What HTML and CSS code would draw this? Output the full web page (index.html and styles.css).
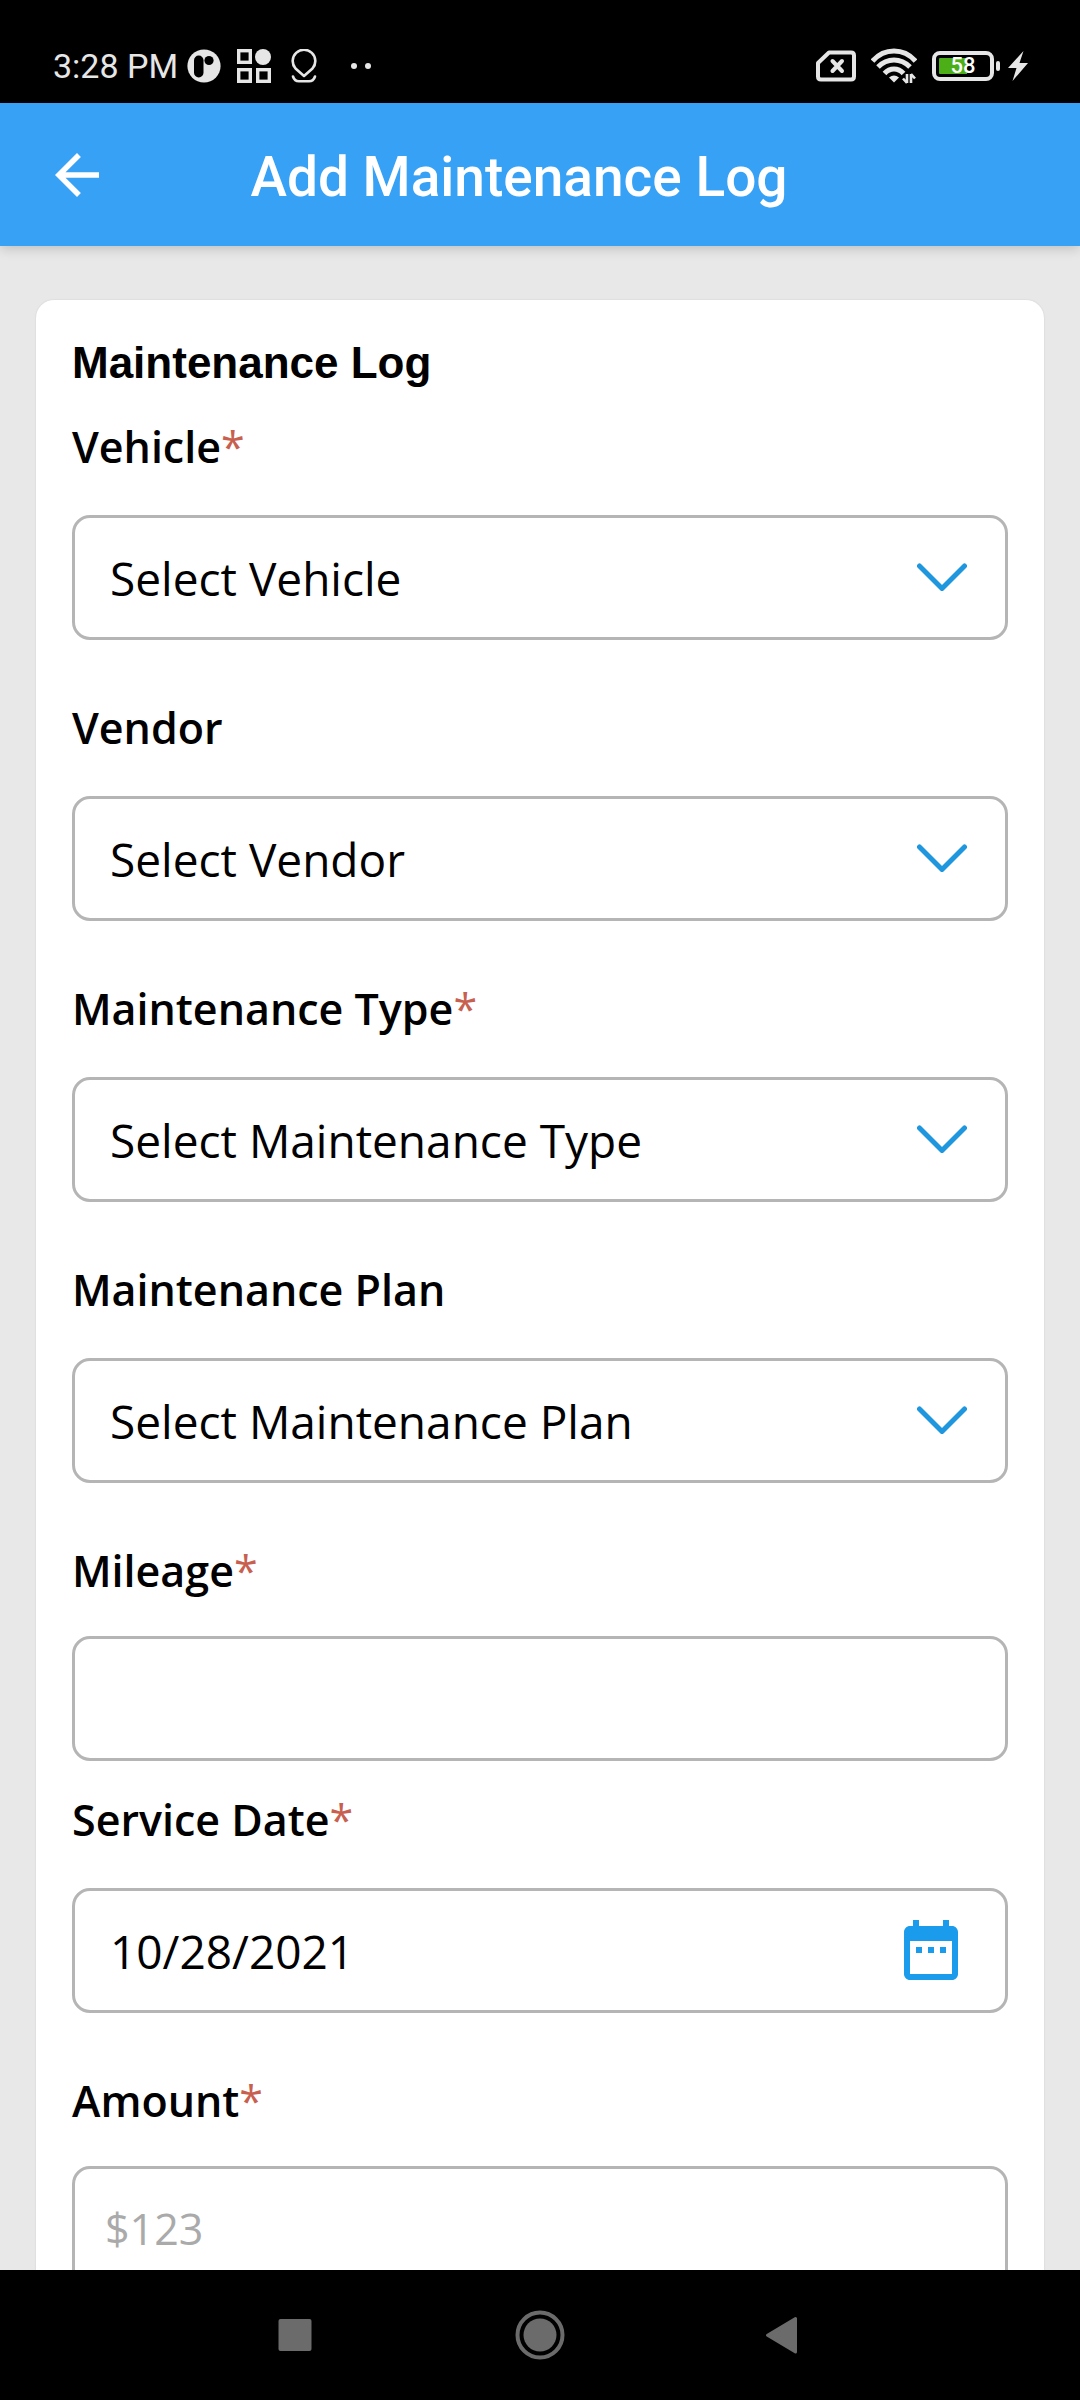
FILE: index.html
```html
<!DOCTYPE html>
<html lang="en">
<head>
  <meta charset="UTF-8" />
  <meta name="viewport" content="width=device-width, initial-scale=1" />
  <title>Add Maintenance Log</title>
  <link rel="stylesheet" href="styles.css">
</head>
<body>
  <!-- Status bar -->
  <div class="status-bar">
    <div class="status-left">
      <span class="time">3:28 PM</span>
      <svg class="app-icon" width="34" height="34" viewBox="0 0 34 34">
        <circle cx="17" cy="17" r="16.6" fill="#e6e6e6"/>
        <rect x="7" y="6.5" width="9.5" height="22" rx="4.7" fill="#000"/>
        <circle cx="22" cy="11.5" r="4.6" fill="#000"/>
      </svg>
      <svg class="grid-icon" width="34" height="34" viewBox="0 0 34 34" fill="none" stroke="#e6e6e6" stroke-width="3.4">
        <rect x="1.7" y="1.7" width="11.6" height="11.6"/>
        <rect x="1.7" y="20.7" width="11.6" height="11.6"/>
        <rect x="20.7" y="20.7" width="11.6" height="11.6"/>
        <circle cx="26" cy="8" r="8" fill="#e6e6e6" stroke="none"/>
      </svg>
      <svg class="pin-icon" width="26" height="34" viewBox="0 0 26 34" fill="none" stroke="#e6e6e6" stroke-width="2.6" stroke-linecap="round">
        <path d="M13 27 L4.5 19.5 A11.3 11.3 0 1 1 21.5 19.5 Z" stroke-linejoin="round"/>
        <path d="M2 27.5 Q3.5 32.3 8 32.3 H18 Q22.5 32.3 24 27.5"/>
      </svg>
      <svg width="22" height="8" viewBox="0 0 22 8" fill="#e6e6e6">
        <circle cx="4" cy="4" r="3"/>
        <circle cx="18" cy="4" r="3"/>
      </svg>
    </div>
    <div class="status-right">
      <svg width="40" height="32" viewBox="0 0 40 32" fill="none" stroke="#e6e6e6" stroke-width="4" stroke-linecap="round" stroke-linejoin="round">
        <path d="M13 2.5 H35 Q38 2.5 38 5.5 V26.5 Q38 29.5 35 29.5 H5 Q2 29.5 2 26.5 V13 Z"/>
        <path d="M16.5 11 L26 21 M26 11 L16.5 21"/>
      </svg>
      <svg width="46" height="36" viewBox="0 0 46 36" fill="none" stroke="#e6e6e6" stroke-width="5">
        <path d="M1.5 13 Q10.5 3 23 3 Q35.5 3 44.5 13"/>
        <path d="M7 19 Q14 12 23 12 Q32 12 39 19"/>
        <path d="M13.5 25.5 Q17.5 21 23 21 Q28.5 21 32.5 25.5"/>
        <path d="M18 29.5 Q23 25.5 28 29.5 L23 34.5 Z" fill="#e6e6e6" stroke="none"/>
        <path d="M36 26 V35 M36 35 L32 30.5 M40 35 V26 M40 26 L44 30.5" stroke-width="2.6"/>
      </svg>
      <div class="battery">
        <div class="battery-body"><span>58</span></div>
        <div class="battery-tip"></div>
      </div>
      <svg class="bolt" width="20" height="30" viewBox="0 0 20 30" fill="#e6e6e6">
        <path d="M15.5 0 L0 17 H8.5 L4.5 30 L20 12 H11.5 Z"/>
      </svg>
    </div>
  </div>

  <!-- App bar -->
  <header class="app-bar">
    <button class="back-btn" type="button" aria-label="Back">
      <svg width="66" height="66" viewBox="0 0 24 24" fill="#fff">
        <path d="M20 11H7.83l5.59-5.59L12 4l-8 8 8 8 1.41-1.41L7.83 13H20v-2z"/>
      </svg>
    </button>
    <h1>Add Maintenance Log</h1>
  </header>

  <main>
    <form class="card">
      <h2>Maintenance Log</h2>

      <div class="field">
        <label for="vehicle">Vehicle<span class="req">*</span></label>
        <div class="control">
          <select id="vehicle"><option>Select Vehicle</option></select>
          <svg class="chevron" width="50" height="28" viewBox="0 0 50 28"><path d="M2.5 3 L25 25.5 L47.5 3"/></svg>
        </div>
      </div>

      <div class="field">
        <label for="vendor">Vendor</label>
        <div class="control">
          <select id="vendor"><option>Select Vendor</option></select>
          <svg class="chevron" width="50" height="28" viewBox="0 0 50 28"><path d="M2.5 3 L25 25.5 L47.5 3"/></svg>
        </div>
      </div>

      <div class="field">
        <label for="type">Maintenance Type<span class="req">*</span></label>
        <div class="control">
          <select id="type"><option>Select Maintenance Type</option></select>
          <svg class="chevron" width="50" height="28" viewBox="0 0 50 28"><path d="M2.5 3 L25 25.5 L47.5 3"/></svg>
        </div>
      </div>

      <div class="field">
        <label for="plan">Maintenance Plan</label>
        <div class="control">
          <select id="plan"><option>Select Maintenance Plan</option></select>
          <svg class="chevron" width="50" height="28" viewBox="0 0 50 28"><path d="M2.5 3 L25 25.5 L47.5 3"/></svg>
        </div>
      </div>

      <div class="field text-field tight">
        <label for="mileage">Mileage<span class="req">*</span></label>
        <div class="control">
          <input id="mileage" type="text" inputmode="numeric">
        </div>
      </div>

      <div class="field">
        <label for="date">Service Date<span class="req">*</span></label>
        <div class="control">
          <input id="date" type="text" value="10/28/2021">
          <button class="calendar-btn" type="button" aria-label="Pick a date">
            <svg width="72" height="72" viewBox="0 0 24 24" fill="#1a9bec">
              <path d="M9 11H7v2h2v-2zm4 0h-2v2h2v-2zm4 0h-2v2h2v-2zm2-7h-1V2h-2v2H8V2H6v2H5c-1.11 0-1.99.9-1.99 2L3 20c0 1.1.89 2 2 2h14c1.1 0 2-.9 2-2V6c0-1.1-.9-2-2-2zm0 16H5V9h14v11z"/>
            </svg>
          </button>
        </div>
      </div>

      <div class="field text-field">
        <label for="amount">Amount<span class="req">*</span></label>
        <div class="control">
          <input id="amount" type="text" placeholder="$123">
        </div>
      </div>
    </form>
  </main>

  <!-- System navigation -->
  <nav class="nav-bar">
    <button type="button" aria-label="Recent apps">
      <svg width="50" height="50" viewBox="0 0 50 50" fill="#6b6b6b"><rect x="8.5" y="9" width="33" height="32" rx="2"/></svg>
    </button>
    <button type="button" aria-label="Home">
      <svg width="50" height="50" viewBox="0 0 50 50">
        <circle cx="25" cy="25" r="22.5" fill="none" stroke="#6b6b6b" stroke-width="4"/>
        <circle cx="25" cy="25" r="16.5" fill="#6b6b6b"/>
      </svg>
    </button>
    <button type="button" aria-label="Back">
      <svg width="50" height="50" viewBox="0 0 50 50" fill="#6b6b6b" stroke="#6b6b6b" stroke-width="3" stroke-linejoin="round"><path d="M35.5 8.5 V42 L7.5 25.2 Z"/></svg>
    </button>
  </nav>
</body>
</html>
```
FILE: styles.css
```css
* {
  box-sizing: border-box;
}
body {
  margin: 0;
  height: 100vh;
  display: flex;
  flex-direction: column;
  background: #e8e8e8;
  font-family: 'Open Sans', sans-serif;
  color: #000;
  overflow: hidden;
}
svg {
  display: block;
}
button {
  padding: 0;
  border: 0;
  background: none;
  cursor: pointer;
}

/* status bar */
.status-bar {
  flex: none;
  height: 103px;
  padding: 29px 52px 0 53px;
  display: flex;
  align-items: center;
  justify-content: space-between;
  background: #000;
  color: #e6e6e6;
  font-family: Roboto, sans-serif;
}
.status-left, .status-right {
  display: flex;
  align-items: center;
}
.time {
  font-size: 34px;
  line-height: 40px;
  font-weight: 400;
}
.app-icon {
  margin-left: 9px;
}
.grid-icon {
  margin: 0 20px 0 16px;
}
.pin-icon {
  margin-right: 33px;
}
.status-right {
  gap: 15px;
}
.battery {
  display: flex;
  align-items: center;
  gap: 2px;
}
.battery-body {
  width: 62px;
  height: 30px;
  border: 4px solid #e6e6e6;
  border-radius: 8px;
  padding: 3px;
  background: linear-gradient(to right, #4caf18 28px, transparent 28px) content-box no-repeat;
  display: flex;
  align-items: center;
  justify-content: center;
}
.battery-body span {
  font-size: 22px;
  line-height: 22px;
  font-weight: 500;
  color: #fff;
}
.battery-tip {
  width: 4px;
  height: 10px;
  border-radius: 2px;
  background: #e6e6e6;
}
.bolt {
  margin-left: -7px;
}

/* app bar */
.app-bar {
  flex: none;
  height: 143px;
  padding: 0 44px;
  display: flex;
  align-items: center;
  background: #37a1f6;
  box-shadow: 0 2px 12px rgba(0,0,0,0.2);
  z-index: 1;
}
h1 {
  flex: 1;
  margin: 4px 108px 0 0;
  font-family: Roboto, sans-serif;
  font-size: 55px;
  line-height: 64px;
  font-weight: 500;
  text-align: center;
  color: #fff;
}

/* form */
main {
  flex: 1;
  min-height: 0;
  padding: 54px 36px 0;
  overflow: hidden;
}
.card {
  padding: 37px 36px 60px;
  background: #fff;
  border-radius: 18px;
  box-shadow: 0 0 2px rgba(0,0,0,0.12);
}
h2 {
  margin: 0 0 28px;
  font-family: 'Liberation Sans', sans-serif;
  font-size: 44px;
  line-height: 52px;
  font-weight: 700;
}
.field {
  margin-bottom: 58px;
}
.field.tight {
  margin-bottom: 29px;
}
label {
  display: block;
  margin-bottom: 38px;
  font-size: 43px;
  line-height: 60px;
  font-weight: 600;
}
.text-field label {
  margin-bottom: 35px;
}
.req {
  font-weight: 400;
  color: #c8604f;
}
.control {
  position: relative;
}
select, input {
  display: block;
  width: 100%;
  height: 125px;
  margin: 0;
  padding: 0 35px;
  border: 3px solid #b5b5b5;
  border-radius: 18px;
  background: #fff;
  font-family: inherit;
  font-size: 46px;
  color: #000;
  appearance: none;
}
.text-field input {
  padding: 0 30px;
  font-size: 43px;
}
input::placeholder {
  color: #aaa;
}
.chevron {
  position: absolute;
  top: 48px;
  right: 41px;
  fill: none;
  stroke: #1f97df;
  stroke-width: 5;
  stroke-linecap: round;
  stroke-linejoin: round;
  pointer-events: none;
}
.calendar-btn {
  position: absolute;
  top: 26px;
  right: 41px;
}

/* navigation bar */
.nav-bar {
  flex: none;
  height: 130px;
  display: flex;
  justify-content: center;
  background: #000;
  z-index: 1;
}
.nav-bar button {
  width: 245px;
  display: flex;
  align-items: center;
  justify-content: center;
}
```
